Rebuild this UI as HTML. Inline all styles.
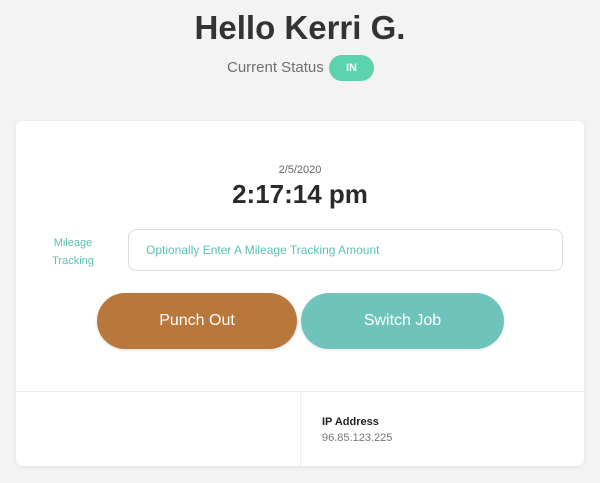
<!DOCTYPE html>
<html><head><style>
body{margin:0;width:600px;height:483px;background:#f3f3f3;font-family:"Liberation Sans",sans-serif;position:relative;overflow:hidden}
.a{position:absolute}
</style></head><body>
<div class="a" style="left:0;width:600px;top:8px;text-align:center;font-size:33px;font-weight:bold;color:#333;line-height:40px">Hello Kerri G.</div>
<div class="a" style="left:227px;top:59px;font-size:15px;color:#6f6f6f;line-height:18px">Current Status</div>
<div class="a" style="left:329px;top:55px;width:45px;height:26px;border-radius:13px;background:#5ad3ae;color:#fff;font-size:11px;font-weight:bold;text-align:center;line-height:26px">IN</div>
<div class="a" style="left:16px;top:121px;width:568px;height:345px;background:#fff;border-radius:6px;box-shadow:0 1px 4px rgba(0,0,0,.08)">
 <div class="a" style="left:0;width:568px;top:43px;text-align:center;font-size:11px;color:#666">2/5/2020</div>
 <div class="a" style="left:0;width:568px;top:57px;text-align:center;font-size:26px;font-weight:bold;color:#2a2a2a;line-height:32px">2:17:14 pm</div>
 <div class="a" style="left:30px;width:54px;top:113px;text-align:center;font-size:11px;color:#5dbfb5;line-height:18px">Mileage<br>Tracking</div>
 <div class="a" style="left:112px;top:108px;width:433px;height:40px;border:1px solid #ddd;border-radius:8px;font-size:12px;color:#5dbfb5;line-height:40px"><span style="padding-left:17px">Optionally Enter A Mileage Tracking Amount</span></div>
 <div class="a" style="left:81px;top:172px;width:200px;height:56px;border-radius:28px;background:#b8773b;color:#fff;font-size:16px;text-align:center;line-height:56px;box-shadow:0 1px 3px rgba(0,0,0,.15)">Punch Out</div>
 <div class="a" style="left:285px;top:172px;width:203px;height:56px;border-radius:28px;background:#6ec4bb;color:#fff;font-size:16px;text-align:center;line-height:56px;box-shadow:0 1px 3px rgba(0,0,0,.1)">Switch Job</div>
 <div class="a" style="left:0;top:270px;width:568px;height:1px;background:#eee"></div>
 <div class="a" style="left:284px;top:271px;width:1px;height:74px;background:#eee"></div>
 <div class="a" style="left:306px;top:295px;font-size:11px;font-weight:bold;color:#222">IP Address</div>
 <div class="a" style="left:306px;top:311px;font-size:11px;color:#777">96.85.123.225</div>
</div>
</body></html>
